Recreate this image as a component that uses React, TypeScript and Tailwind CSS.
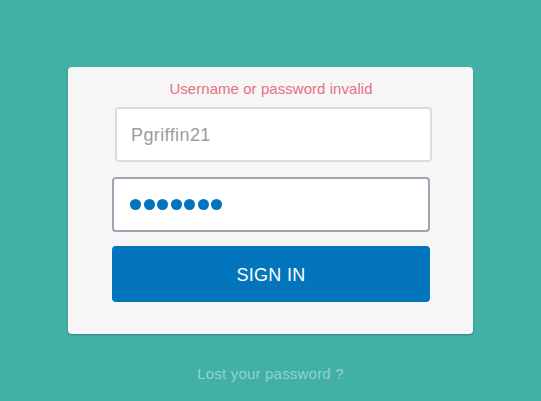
import React from 'react'

export default function App() {
  const dots = [0, 1, 2, 3, 4, 5, 6]

  return (
    <div className="flex h-[401px] w-[541px] flex-col items-center bg-[#42b0a5] pt-[67px] font-['Liberation_Sans',Arial,sans-serif]">
      {/* login card */}
      <div className="flex h-[267px] w-[405px] flex-col rounded-[4px] bg-[#f6f6f6] pl-[44px] pr-[43px] shadow-[0_1px_2px_rgba(0,0,0,0.25)]">
        <p className="mt-[12px] text-center text-[15px] leading-[20px] tracking-[0.05px] text-[#e7717f]">
          Username or password invalid
        </p>

        <div className="ml-[3px] mr-[-2px] mt-[8px] flex h-[55px] items-center rounded-[4px] border-2 border-[#dcdcdc] bg-white pl-[14px] pt-[2px]">
          <span className="text-[18px] tracking-[0.4px] text-[#9c9c9c]">Pgriffin21</span>
        </div>

        <div className="mt-[15px] flex h-[55px] items-center gap-[2.5px] rounded-[4px] border-2 border-[#a4a2b2] bg-white pl-[16px]">
          {dots.map((d) => (
            <span key={d} className="h-[11px] w-[11px] rounded-full bg-[#0273bd]" />
          ))}
        </div>

        <button className="mt-[14px] flex h-[56px] items-center justify-center rounded-[4px] bg-[#0275bc] pt-[3px] text-[18px] tracking-[0.3px] text-white">
          SIGN IN
        </button>
      </div>

      <p className="mt-[29px] text-[15px] tracking-[0.2px] text-[#90d4cb]">Lost your password ?</p>
    </div>
  )
}
